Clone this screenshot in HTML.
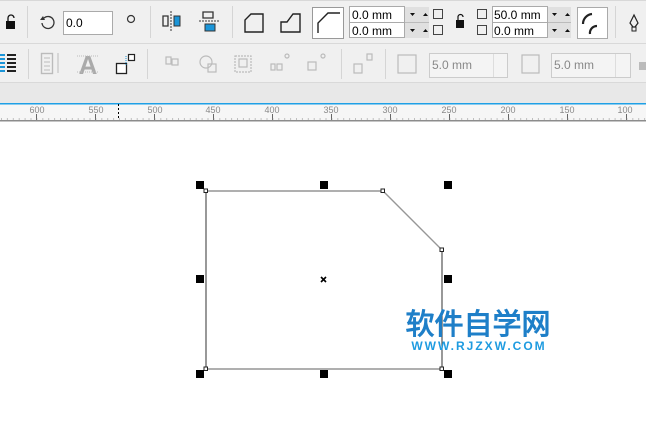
<!DOCTYPE html>
<html><head><meta charset="utf-8"><style>
html,body{margin:0;padding:0;width:646px;height:433px;overflow:hidden;background:#fff}
svg{display:block}
text{font-family:"Liberation Sans",sans-serif}
</style></head><body>
<svg width="646" height="433" viewBox="0 0 646 433" xmlns="http://www.w3.org/2000/svg">
<rect x="0" y="0" width="646" height="43" fill="#f0f0f0"/>
<rect x="0" y="0" width="646" height="1" fill="#d8d8d8"/>
<rect x="0" y="43" width="646" height="1" fill="#d9d9d9"/>
<rect x="0" y="44" width="646" height="39" fill="#f0f0f0"/>
<rect x="0" y="82" width="646" height="1" fill="#d9d9d9"/>
<rect x="0" y="83" width="646" height="20" fill="#e8e8e8"/>
<rect x="0" y="103" width="646" height="1.5" fill="#1ea0e6"/>
<rect x="0" y="104.5" width="646" height="16" fill="#f6f6f6"/>
<rect x="0" y="120" width="646" height="1.5" fill="#8c8c8c"/>
<!-- row1 -->
<g fill="#111"><rect x="6" y="21" width="9" height="8"/><path d="M8 21v-3a3 3 0 0 1 6 0" fill="none" stroke="#111" stroke-width="1.3"/></g>
<rect x="27" y="6" width="1" height="32" fill="#d5d5d5"/>
<path d="M44 18a6 6 0 1 1-2 5" fill="none" stroke="#333" stroke-width="1.3"/><path d="M40 20l3-4 2 4z" fill="#333"/>
<rect x="63.5" y="11.5" width="49" height="23" fill="#fff" stroke="#aaa"/>
<text x="66" y="27" font-size="12" fill="#000">0.0</text>
<circle cx="131" cy="19" r="3.5" fill="none" stroke="#333" stroke-width="1.2"/>
<rect x="150" y="6" width="1" height="32" fill="#d5d5d5"/>
<path d="M163 16h5v10h-5z" fill="none" stroke="#333" stroke-width="1.3"/><path d="M174 16h6v10h-6z" fill="#1b95d8" stroke="#333" stroke-width="1"/><path d="M171 11v21" stroke="#333" stroke-dasharray="2 1"/>
<path d="M203 12h10v6h-10z" fill="none" stroke="#333" stroke-width="1.3"/><path d="M205 24h10v7h-10z" fill="#1b95d8" stroke="#333"/><path d="M199 21h21" stroke="#333" stroke-dasharray="2 1"/>
<rect x="232" y="6" width="1" height="32" fill="#d5d5d5"/>
<path d="M245 32v-12l6-6h12v18z" fill="none" stroke="#222" stroke-width="1.4"/>
<path d="M281 32v-10h6l6-8h7v18z" fill="none" stroke="#222" stroke-width="1.4"/>
<rect x="312.5" y="7.5" width="31" height="31" fill="#fff" stroke="#999"/>
<path d="M318 33v-10l10-10h12" fill="none" stroke="#222" stroke-width="1.4"/>
<rect x="349.5" y="6.5" width="55" height="31" fill="#fff" stroke="#aaa"/><rect x="349" y="22" width="56" height="1" fill="#aaa"/>
<text x="352" y="19" font-size="12">0.0 mm</text><text x="352" y="35" font-size="12">0.0 mm</text>
<rect x="405" y="7" width="24" height="31" fill="#e0e0e0"/><rect x="405" y="22" width="24" height="1" fill="#bbb"/>
<path d="M410 13h5l-2.5 3zM423 16h5l-2.5-3zM410 29h5l-2.5 3zM423 32h5l-2.5-3z" fill="#111"/>
<rect x="433.5" y="9.5" width="9" height="9" fill="none" stroke="#444"/><rect x="433.5" y="25.5" width="9" height="9" fill="none" stroke="#444"/>
<g fill="#111"><rect x="456" y="20" width="8" height="8"/><path d="M458 20v-3a2.5 2.5 0 0 1 5 0" fill="none" stroke="#111" stroke-width="1.2"/></g>
<rect x="477.5" y="9.5" width="9" height="9" fill="none" stroke="#444"/><rect x="477.5" y="25.5" width="9" height="9" fill="none" stroke="#444"/>
<rect x="492.5" y="6.5" width="55" height="31" fill="#fff" stroke="#aaa"/><rect x="492" y="22" width="56" height="1" fill="#aaa"/>
<text x="494" y="19" font-size="12">50.0 mm</text><text x="494" y="35" font-size="12">0.0 mm</text>
<rect x="548" y="7" width="23" height="31" fill="#e0e0e0"/><rect x="548" y="22" width="23" height="1" fill="#bbb"/>
<path d="M552 13h5l-2.5 3zM565 16h5l-2.5-3zM552 29h5l-2.5 3zM565 32h5l-2.5-3z" fill="#111"/>
<rect x="577.5" y="7.5" width="30" height="31" fill="#fff" stroke="#aaa"/>
<path d="M583 24a10 10 0 0 1 9-10M590 34a7 7 0 0 1 7-8" fill="none" stroke="#222" stroke-width="2.2"/>
<rect x="615" y="6" width="1" height="32" fill="#d5d5d5"/>
<path d="M634 15l-4 8 3 4h2l3-4z" fill="none" stroke="#222" stroke-width="1.2"/><rect x="632" y="27" width="4" height="4" fill="none" stroke="#222"/>
<!-- row2 -->
<g fill="#1b95d8"><rect x="0" y="54" width="5" height="2"/><rect x="0" y="58" width="5" height="2"/><rect x="0" y="62" width="5" height="2"/><rect x="0" y="66" width="5" height="2"/><rect x="0" y="70" width="5" height="2"/></g>
<g fill="#222"><rect x="7" y="54" width="9" height="2"/><rect x="7" y="58" width="9" height="2"/><rect x="7" y="62" width="9" height="2"/><rect x="7" y="66" width="9" height="2"/><rect x="7" y="70" width="9" height="2"/></g>
<rect x="28" y="49" width="1" height="30" fill="#d5d5d5"/>
<rect x="41.5" y="53.5" width="11" height="20" fill="none" stroke="#bbb" stroke-width="1.4"/><path d="M44 58h6M44 62h6M44 66h6M44 70h6M58 53v20" stroke="#bbb"/>
<text x="88" y="74" font-size="26" font-weight="bold" fill="#aaa" text-anchor="middle">A</text>
<path d="M77 56h22M77 72h22" stroke="#bbb" stroke-dasharray="1 1"/>
<rect x="116.5" y="63.5" width="10" height="10" fill="#fff" stroke="#222" stroke-width="1.3"/><rect x="128.5" y="54.5" width="6" height="6" fill="#fff" stroke="#222" stroke-width="1.2"/><path d="M126 56v10" stroke="#1b95d8" stroke-dasharray="1 1"/>
<rect x="147" y="49" width="1" height="30" fill="#d5d5d5"/>
<g fill="none" stroke="#bbb" stroke-width="1.2">
<rect x="166" y="57" width="5" height="7"/><rect x="172" y="59" width="6" height="6"/>
<circle cx="206" cy="62" r="6"/><rect x="208" y="64" width="8" height="8"/>
<rect x="235" y="56" width="16" height="16" stroke-dasharray="2 1"/><rect x="239" y="59" width="8" height="8"/>
<rect x="271" y="64" width="4" height="6"/><rect x="277" y="64" width="5" height="6"/><circle cx="287" cy="56" r="2"/>
<rect x="308" y="62" width="8" height="8"/><circle cx="323" cy="56" r="2"/>
<rect x="354" y="64" width="8" height="9"/><rect x="367" y="54" width="5" height="6"/>
<rect x="398" y="55" width="18" height="18"/>
<rect x="522" y="55" width="17" height="18"/>
</g>
<rect x="341" y="49" width="1" height="30" fill="#d5d5d5"/>
<rect x="385" y="49" width="1" height="30" fill="#d5d5d5"/>
<rect x="429.5" y="53.5" width="78" height="24" fill="#f4f4f4" stroke="#ccc"/><rect x="493" y="54" width="1" height="23" fill="#ddd"/>
<text x="432" y="69" font-size="12" fill="#888">5.0 mm</text>
<rect x="551.5" y="53.5" width="79" height="24" fill="#f4f4f4" stroke="#ccc"/><rect x="615" y="54" width="1" height="23" fill="#ddd"/>
<text x="554" y="69" font-size="12" fill="#888">5.0 mm</text>
<g fill="#bbb"><rect x="639" y="62" width="7" height="8"/></g>
<!-- ruler -->
<g font-size="9" fill="#8a8a8a" text-anchor="middle">
<text x="37" y="113">600</text><text x="96" y="113">550</text><text x="155" y="113">500</text><text x="213" y="113">450</text><text x="272" y="113">400</text><text x="331" y="113">350</text><text x="390" y="113">300</text><text x="449" y="113">250</text><text x="508" y="113">200</text><text x="567" y="113">150</text><text x="625" y="113">100</text>
</g>
<g stroke="#666" stroke-width="1">
<path d="M36.5 114v6M95.5 114v6M154.5 114v6M213.5 114v6M272.5 114v6M331.5 114v6M390.5 114v6M449.5 114v6M508.5 114v6M567.5 114v6M626.5 114v6"/>
</g>
<g stroke="#888" stroke-dasharray="1 4.9"><path d="M1 119h646"/></g>
<path d="M118.5 104v16" stroke="#000" stroke-dasharray="2 2"/>
<!-- shape -->
<path d="M206 191H383L442 250V369H206Z" fill="none" stroke="#555" stroke-width="1.2"/>
<path d="M206 191H383L442 250" fill="none" stroke="#999" stroke-width="1.2"/>
<path d="M206 369H442" stroke="#999" stroke-width="1.2"/>
<g fill="#fff" stroke="#222" stroke-width="1"><rect x="204" y="189" width="3.5" height="3.5"/><rect x="381" y="189" width="3.5" height="3.5"/><rect x="440" y="248" width="3.5" height="3.5"/><rect x="440" y="367" width="3.5" height="3.5"/><rect x="204" y="367" width="3.5" height="3.5"/></g>
<g fill="#000"><rect x="196" y="181" width="8" height="8"/><rect x="320" y="181" width="8" height="8"/><rect x="444" y="181" width="8" height="8"/><rect x="196" y="275" width="8" height="8"/><rect x="444" y="275" width="8" height="8"/><rect x="196" y="370" width="8" height="8"/><rect x="320" y="370" width="8" height="8"/><rect x="444" y="370" width="8" height="8"/></g>
<path d="M321 277l5 5M326 277l-5 5" stroke="#000" stroke-width="1.6"/>
<!-- watermark -->
<text x="478" y="334" font-size="29" font-weight="bold" fill="#1e7fc8" text-anchor="middle" font-family="'Liberation Sans','Noto Sans CJK SC',sans-serif">软件自学网</text>
<text x="479" y="350" font-size="12" font-weight="bold" fill="#1e9be0" text-anchor="middle" letter-spacing="2">WWW.RJZXW.COM</text>
</svg>
</body></html>
